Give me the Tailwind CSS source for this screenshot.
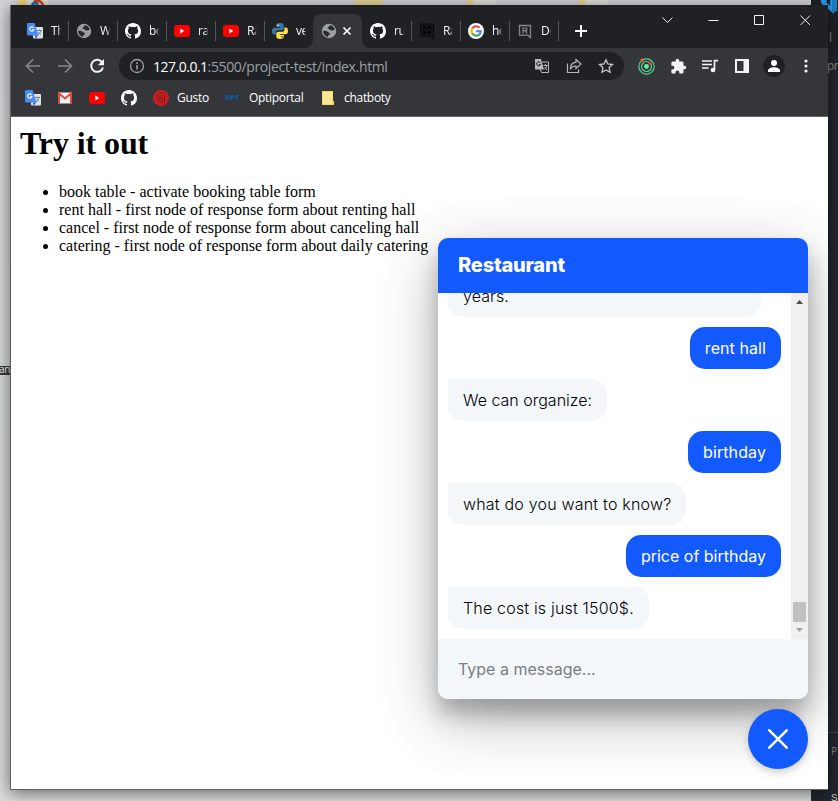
<!DOCTYPE html>
<html lang="en">
<head>
<meta charset="utf-8">
<title>Try it out</title>
<script src="https://cdn.jsdelivr.net/npm/@tailwindcss/browser@4"></script>
</head>
<body class="h-[801px] w-[838px] overflow-hidden">
<svg class="hidden">
  <symbol id="github" viewBox="0 0 16 16"><path fill="#fff" d="M8 0C3.58 0 0 3.58 0 8c0 3.54 2.29 6.53 5.47 7.59.4.07.55-.17.55-.38 0-.19-.01-.82-.01-1.49-2.01.37-2.53-.49-2.69-.94-.09-.23-.48-.94-.82-1.13-.28-.15-.68-.52-.01-.53.63-.01 1.08.58 1.23.82.72 1.21 1.87.87 2.33.66.07-.52.28-.87.51-1.07-1.78-.2-3.64-.89-3.64-3.95 0-.87.31-1.59.82-2.15-.08-.2-.36-1.02.08-2.12 0 0 .67-.21 2.2.82a7.6 7.6 0 0 1 4 0c1.53-1.04 2.2-.82 2.2-.82.44 1.1.16 1.92.08 2.12.51.56.82 1.27.82 2.15 0 3.07-1.87 3.75-3.65 3.95.29.25.54.73.54 1.48 0 1.07-.01 1.93-.01 2.2 0 .21.15.46.55.38A8 8 0 0 0 16 8c0-4.42-3.58-8-8-8z"/></symbol>
  <symbol id="youtube" viewBox="0 0 16 16"><rect y="2" width="16" height="12" rx="3" fill="#f00"/><path d="M6.300 5.600v4.800L10.300 8z" fill="#fff"/></symbol>
  <symbol id="translate" viewBox="0 0 16 16"><rect x="6" y="4" width="10" height="11.500" rx="1" fill="#dfe3e8"/><path d="M8.300 15.800 8 12.500h3.500z" fill="#3460c0"/><path d="M10 7.500h5M12.500 6.500v1M14 7.500c-.4 2-1.700 3.300-3 4M11.500 9c.6 1.200 1.300 2 2.300 2.600" stroke="#6d8792" fill="none"/><path d="M1 0h6.500l4 12.500H1a1 1 0 0 1-1-1V1a1 1 0 0 1 1-1z" fill="#4a8af4"/><path d="M6.600 4.700A2.200 2.200 0 1 0 7 6.700H4.900" stroke="#fff" stroke-width="1.100" fill="none"/></symbol>
  <symbol id="globe" viewBox="0 0 16 16"><circle cx="8" cy="8" r="7.200" fill="#9aa0a6"/><path d="M2 8c1.500-.3 3.500-.3 4.500.8.8.8 2 .4 2.400 1.500.4 1-.6 1.400-1.200 1.800-.6.500-.4 1.300-.7 1.900C4.500 13.600 2.300 11.300 2 8zM8.500 1.900c.7 1-.3 1.700-1.300 2.200C6.300 4.600 6.700 6 8 6.200c1 .2 1.500 1.300 2.700 1.300 1.100 0 1.800-.7 3-.5C13.500 4.200 11.200 2 8.500 1.900z" fill="#292a2d"/></symbol>
</svg>

<div class="relative h-[801px] w-[838px] overflow-hidden bg-gradient-to-b from-[#d6d7d9] to-[#dcddde]">
  <!-- Desktop remnants and the editor window behind the browser -->
  <div class="absolute left-[18px] top-0 h-[5px] w-[30px] bg-[#e6e3dc]"><div class="h-full w-2 bg-[#f2d585]"></div></div>
  <svg class="absolute left-[30px] top-0" width="17" height="5"><path d="M2 5 5 2l3 3" stroke="#1777a8" stroke-width="3" fill="none"/><path d="M4 1c5-1 8 1 9 4" stroke="#d93b2b" stroke-width="2.500" fill="none"/></svg>
  <div class="absolute left-[354px] top-0 h-[5px] w-[29px] bg-[#ead79c]"></div>
  <div class="absolute left-[466px] top-0 h-[5px] w-[30px] bg-[#e2e0d9]"><div class="h-full w-2 bg-[#ead79c]"></div></div>
  <div class="absolute left-[578px] top-0 h-[5px] w-[30px] bg-[#e2e0d9]"><div class="h-full w-2 bg-[#ead79c]"></div></div>
  <div class="absolute -left-[3px] top-[366px] h-[9px] w-4 bg-[#3a3a3c]"></div>
  <div class="absolute -left-px top-[363px] font-['Open_Sans',sans-serif] text-[10px] leading-[13px] tracking-[-0.4px] text-white">an</div>
  <div class="absolute left-[811px] top-0 h-[801px] w-[27px] bg-[#23272e]">
    <div class="h-[55px] bg-[#1e2227]"></div>
    <svg class="absolute left-[10px] top-0" width="17" height="14"><path d="M0 0 11 10V0M1 4 5 0" fill="none" stroke="#2a9df4" stroke-width="3.500"/><path d="M11-2h5v13l-5 2z" fill="#1b80c8"/></svg>
    <div class="absolute left-[18px] top-[31px] font-['Open_Sans',sans-serif] text-[12px] leading-[14px] text-[#8b8f97]">l</div>
    <div class="absolute left-[16px] top-[59px] font-['Open_Sans',sans-serif] text-[12px] leading-[14px] tracking-[-0.5px] text-[#8b8f97]">pr</div>
    <div class="absolute left-0 top-[732px] h-px w-[27px] bg-[#3e4452]"></div>
    <div class="absolute left-5 top-[745px] font-['Open_Sans',sans-serif] text-[10px] leading-[13px] text-[#7f848e]">P</div>
    <div class="absolute left-[20px] top-[791px] font-['Liberation_Mono',monospace] text-[11px] leading-[14px] text-[#c5c9d0]">S</div>
  </div>

  <!-- Browser window -->
  <div class="absolute left-[10px] top-[5px] flex h-[785px] w-[818px] flex-col border-b border-l border-[#5f6063] bg-white shadow-[0_3px_16px_rgba(0,0,0,0.55)]">
    <!-- Tab strip -->
    <div class="relative flex h-[43px] shrink-0 items-end bg-[#202124] pl-[9px] font-['Open_Sans','Noto_Sans',sans-serif] text-[12px] tracking-[-0.4px] text-[#f1f3f4]">
      <div class="flex h-[34px] w-[49px] shrink-0 items-center pl-[7px]"><svg class="size-4 shrink-0"><use href="#translate"/></svg><span class="ml-2 w-[10px] overflow-hidden [mask-image:linear-gradient(to_right,#000_70%,transparent)]">Th</span><i class="ml-[7px] h-5 w-px bg-[#55575b]"></i></div>
      <div class="flex h-[34px] w-[49px] shrink-0 items-center pl-[7px]"><svg class="size-4 shrink-0"><use href="#globe"/></svg><span class="ml-2 w-[10px] overflow-hidden [mask-image:linear-gradient(to_right,#000_70%,transparent)]">W</span><i class="ml-[7px] h-5 w-px bg-[#55575b]"></i></div>
      <div class="flex h-[34px] w-[49px] shrink-0 items-center pl-[7px]"><svg class="size-4 shrink-0"><use href="#github"/></svg><span class="ml-2 w-[10px] overflow-hidden [mask-image:linear-gradient(to_right,#000_70%,transparent)]">bo</span><i class="ml-[7px] h-5 w-px bg-[#55575b]"></i></div>
      <div class="flex h-[34px] w-[49px] shrink-0 items-center pl-[7px]"><svg class="size-4 shrink-0"><use href="#youtube"/></svg><span class="ml-2 w-[10px] overflow-hidden [mask-image:linear-gradient(to_right,#000_80%,transparent)]">ra</span><i class="ml-[7px] h-5 w-px bg-[#55575b]"></i></div>
      <div class="flex h-[34px] w-[49px] shrink-0 items-center pl-[7px]"><svg class="size-4 shrink-0"><use href="#youtube"/></svg><span class="ml-2 w-[10px] overflow-hidden [mask-image:linear-gradient(to_right,#000_70%,transparent)]">Ra</span><i class="ml-[7px] h-5 w-px bg-[#55575b]"></i></div>
      <div class="flex h-[34px] w-[48px] shrink-0 items-center pl-[7px]"><svg class="size-4 shrink-0" viewBox="0 0 16 16"><path d="M8 0C5 0 4.200.9 4.200 2.400V4H8.200v.7H2.300C.8 4.700 0 6 0 8s.7 3.500 2 3.500h1.600V9.600c0-1.400 1-2.300 2.300-2.300h3.800c1.200 0 2-.8 2-2V2.400C11.700.8 10.500 0 8 0z" fill="#3b77a8"/><path d="M8 16c3 0 3.800-.9 3.800-2.400V12H7.800v-.7h5.900C15.200 11.300 16 10 16 8s-.7-3.500-2-3.500h-1.600v1.900c0 1.400-1 2.300-2.300 2.300H6.300c-1.200 0-2 .8-2 2v2.900C4.300 15.200 5.500 16 8 16z" fill="#ffdc4c"/><circle cx="6" cy="2.200" r=".8" fill="#fff"/><circle cx="10" cy="13.800" r=".8" fill="#202124"/></svg><span class="ml-2 w-[10px] overflow-hidden [mask-image:linear-gradient(to_right,#000_80%,transparent)]">ve</span></div>
      <div class="relative flex h-[34px] w-[49px] shrink-0 items-center rounded-t-lg bg-[#35363a] pl-[8px]">
        <svg class="absolute -left-2 bottom-0" width="8" height="8"><path d="M8 0v8H0a8 8 0 0 0 8-8z" fill="#35363a"/></svg>
        <svg class="absolute -right-2 bottom-0" width="8" height="8"><path d="M0 0v8h8a8 8 0 0 1-8-8z" fill="#35363a"/></svg>
        <svg class="size-4 shrink-0"><use href="#globe"/></svg>
        <svg class="ml-[5px] size-[10px]" viewBox="0 0 10 10"><path d="m1.500 1.500 7 7m0-7-7 7" stroke="#fff" stroke-width="1.700"/></svg>
      </div>
      <div class="flex h-[34px] w-[50px] shrink-0 items-center pl-[8px]"><svg class="size-4 shrink-0"><use href="#github"/></svg><span class="ml-2 w-[10px] overflow-hidden [mask-image:linear-gradient(to_right,#000_80%,transparent)]">ru</span><i class="ml-[7px] h-5 w-px bg-[#55575b]"></i></div>
      <div class="flex h-[34px] w-[49px] shrink-0 items-center pl-[7px]"><svg class="size-4 shrink-0" viewBox="0 0 16 16"><path d="M1.500 1h13v14.500L11 13H1.500z" fill="#17181a" stroke="#090909"/><path d="M4 6V3.500h2.500V6M4 5h2.500M9 6V3.500h2.500V6M9 5h2.500M6.500 8H4v1.200h2.500V11H4M9 11V8h2.500v3M9 9.700h2.500" fill="none" stroke="#020202"/></svg><span class="ml-2 w-[10px] overflow-hidden [mask-image:linear-gradient(to_right,#000_70%,transparent)]">Ra</span><i class="ml-[7px] h-5 w-px bg-[#55575b]"></i></div>
      <div class="flex h-[34px] w-[49px] shrink-0 items-center pl-[7px]"><svg class="size-4 shrink-0" viewBox="0 0 16 16"><circle cx="8" cy="8" r="8" fill="#fff"/><g fill="none" stroke-width="2.100"><path d="M4.300 5.300A4.700 4.700 0 0 1 11.500 4.700" stroke="#ea4335"/><path d="M4.500 11a4.900 4.900 0 0 1-.2-5.700" stroke="#fbbc05"/><path d="M11.300 11.600a4.900 4.900 0 0 1-7-.9" stroke="#34a853"/><path d="M8.100 8.200h4.600c0 1.500-.5 2.700-1.500 3.500" stroke="#4285f4"/></g></svg><span class="ml-2 w-[10px] overflow-hidden [mask-image:linear-gradient(to_right,#000_70%,transparent)]">ho</span><i class="ml-[7px] h-5 w-px bg-[#55575b]"></i></div>
      <div class="flex h-[34px] w-[49px] shrink-0 items-center pl-[7px]"><svg class="size-4 shrink-0" viewBox="0 0 16 16"><path d="M2.500 2.500h11v12l-2.800-2.300H2.500z" fill="none" stroke="#85878a" stroke-width="1.300"/><path d="M6 10.300V5h3.700v2.700H6m2.200 0 1.800 2.600" fill="none" stroke="#85878a" stroke-width="1.200"/></svg><span class="ml-2 w-[10px] overflow-hidden [mask-image:linear-gradient(to_right,#000_75%,transparent)]">Do</span><i class="ml-[7px] h-5 w-px bg-[#55575b]"></i></div>
      <div class="flex h-[34px] w-[44px] shrink-0 items-center justify-center"><svg class="size-3" viewBox="0 0 12 12"><path d="M6 0v12M0 6h12" stroke="#fff" stroke-width="2"/></svg></div>
      <svg class="mb-[13px] ml-[41px] shrink-0" width="174" height="30" fill="none" stroke="#f1f1f1"><path d="m18.500 12.500 5 5 5-5M64.500 15.500h10M110.500 10.500h9v9h-9zM156.500 10.500l9.500 9.500m0-9.500-9.500 9.500"/></svg>
    </div>

    <!-- Navigation toolbar -->
    <div class="flex h-9 shrink-0 items-center bg-[#35363a] pl-[6px]">
      <div class="flex w-8 justify-center"><svg class="size-4" viewBox="0 0 16 16"><path d="M15 8H2M8 1.500 1.500 8 8 14.500" fill="none" stroke="#84868a" stroke-width="1.700"/></svg></div>
      <div class="flex w-8 justify-center"><svg class="size-4" viewBox="0 0 16 16"><path d="M1 8h13M8 1.500 14.500 8 8 14.500" fill="none" stroke="#84868a" stroke-width="1.700"/></svg></div>
      <div class="flex w-8 justify-center"><svg class="size-4" viewBox="0 0 16 16"><path d="M13.300 4.600A6 6 0 1 0 14 9.500" fill="none" stroke="#f1f3f4" stroke-width="2"/><path d="M15 1v6.200H8.800z" fill="#f1f3f4"/></svg></div>
      <div class="ml-[6px] flex h-7 w-[505px] items-center rounded-full bg-[#202124] pl-[10px] font-['Open_Sans','Noto_Sans',sans-serif] text-[14px]">
        <svg class="size-4" viewBox="0 0 16 16"><circle cx="8" cy="8" r="6.500" fill="none" stroke="#9aa0a6" stroke-width="1.300"/><path d="M8 7v4.500M8 4.300v1.700" stroke="#9aa0a6" stroke-width="1.600"/></svg>
        <span class="ml-[8px] w-[373px] whitespace-nowrap tracking-[-0.36px] text-[#9aa0a6]"><span class="tracking-[-0.5px] text-white">127.0.0.1</span>:5500/project-test/index.html</span>
        <div class="flex w-8 justify-center"><svg class="size-4" viewBox="0 0 16 16"><path d="M8 4h6.500v10.500H7.500L6 11" fill="none" stroke="#b5b7ba"/><path d="M9.500 7.500h4M11.500 6v1.500M13 7.500c-.5 2-1.500 3-2.500 4M10.500 9l2.500 3" stroke="#b5b7ba" fill="none"/><path d="M1 1h5.800L10 11.500H1z" fill="#b5b7ba"/><path d="M6.300 4.700A2 2 0 1 0 6.500 6.500H4.800" stroke="#202124" fill="none"/></svg></div>
        <div class="flex w-8 justify-center"><svg class="size-4" viewBox="0 0 16 16" fill="none" stroke="#b5b7ba" stroke-width="1.200"><path d="M1.500 5.500v9h11v-3M10 1.500l5 4.500-5 4.500V8C7.500 7.800 5.500 9 4.300 11.300c0-4 2.200-6.800 5.700-7.200z"/></svg></div>
        <div class="flex w-8 justify-center"><svg class="size-4" viewBox="0 0 16 16"><path d="m8 1.800 1.900 4.200 4.600.5-3.400 3.100.9 4.600-4-2.300-4 2.300.9-4.600-3.400-3.100L6.100 6z" fill="none" stroke="#c6c8cb" stroke-width="1.300"/></svg></div>
      </div>
      <div class="ml-[6px] flex w-8 justify-center"><svg class="size-[17px]" viewBox="0 0 16 16"><g fill="none" stroke="#55d39a" stroke-width="1.100"><circle cx="8" cy="8" r="7.200"/><circle cx="8" cy="8" r="4.700"/></g><circle cx="8" cy="8" r="2.300" fill="#5ff0a2"/><circle cx="4" cy="1.800" r="1.600" fill="#f26322"/><circle cx="11.300" cy="4.800" r="1.500" fill="#f04a24"/></svg></div>
      <div class="flex w-8 justify-center"><svg class="size-[17px]" viewBox="0 0 24 24"><path fill="#f1f3f4" d="M20.500 11H19V7a2 2 0 0 0-2-2h-4V3.500a2.500 2.500 0 0 0-5 0V5H4a2 2 0 0 0-2 2v3.800h1.500a2.700 2.700 0 0 1 0 5.400H2V20c0 1.100.9 2 2 2h3.800v-1.500a2.700 2.700 0 0 1 5.400 0V22H17a2 2 0 0 0 2-2v-4h1.500a2.500 2.500 0 0 0 0-5z"/></svg></div>
      <div class="flex w-8 justify-center"><svg class="size-4" viewBox="0 0 16 16"><path d="M0 3h10M0 6.500h10M0 10h6.500" stroke="#f1f3f4" stroke-width="1.500"/><path d="M12.500 12V2.700H16" fill="none" stroke="#f1f3f4" stroke-width="1.700"/><circle cx="11" cy="12" r="2.300" fill="#f1f3f4"/></svg></div>
      <div class="flex w-8 justify-center"><svg class="size-4" viewBox="0 0 16 16"><path d="M2 2h12v12H2z" fill="none" stroke="#f1f3f4" stroke-width="2"/><path d="M9.500 2H14v12H9.500z" fill="#f1f3f4"/></svg></div>
      <div class="flex w-8 justify-center"><svg class="size-[22px]" viewBox="0 0 22 22"><circle cx="11" cy="11" r="11" fill="#202124"/><circle cx="11" cy="8" r="3" fill="#fff"/><path d="M5 17v-1.500c0-2 3-3.300 6-3.300s6 1.300 6 3.300V17z" fill="#fff"/></svg></div>
      <div class="flex w-8 justify-center"><svg class="size-4" viewBox="0 0 16 16" fill="#f1f3f4"><circle cx="8" cy="3" r="1.600"/><circle cx="8" cy="8" r="1.600"/><circle cx="8" cy="13" r="1.600"/></svg></div>
    </div>

    <!-- Bookmarks bar -->
    <div class="flex h-[33px] shrink-0 items-center border-b border-[#626367] bg-[#35363a] pb-[4px] pl-[14px] font-['Open_Sans','Noto_Sans',sans-serif] text-[12px] tracking-[-0.3px] text-white">
      <svg class="size-4"><use href="#translate"/></svg>
      <svg class="ml-4 size-4" viewBox="0 0 16 16"><rect x="1" y="2.500" width="14" height="11" rx="1" fill="#f1f1f1"/><path d="M2 13.500v-10l6 5 6-5v10" fill="none" stroke="#dd4b3e" stroke-width="2"/></svg>
      <svg class="ml-4 size-4"><use href="#youtube"/></svg>
      <svg class="ml-4 size-4"><use href="#github"/></svg>
      <svg class="ml-4 size-4" viewBox="0 0 16 16"><circle cx="8" cy="8" r="8" fill="#c4201f"/><path d="M10.500 3.500C7 1.500 3.500 5 4 8.500c.4 3 3 4.500 5.500 3.500V8.500H7M11.500 3v9.500M9 5.500c-2 0-2.500 2-2.500 4" fill="none" stroke="#7a191b" stroke-width=".9"/></svg>
      <span class="ml-2 w-12">Gusto</span>
      <span class="w-4 text-[7px] font-extrabold italic tracking-[0.2px] text-[#0a5cab]">OPT</span>
      <span class="ml-2 w-[73px]">Optiportal</span>
      <svg class="h-[14px] w-3" viewBox="0 0 12 14"><path d="M0 0h11v10h1v4H0z" fill="#fbd867"/><path d="M1 1h9v12H1z" fill="#ffe596"/></svg>
      <span class="ml-[10px]">chatboty</span>
    </div>

    <!-- Page -->
    <div class="relative grow overflow-hidden bg-white font-['Liberation_Serif',serif] text-black">
      <h1 class="ml-[9px] mt-[8px] text-[32px] font-bold leading-[37px] tracking-[-0.1px]">Try it out</h1>
      <ul class="ml-2 mt-[21px] list-disc pl-10 text-[16px] leading-[18px]">
        <li>book table - activate booking table form</li>
        <li>rent hall - first node of response form about renting hall</li>
        <li>cancel - first node of response form about canceling hall</li>
        <li>catering - first node of response form about daily catering</li>
      </ul>

      <!-- Chat widget -->
      <section class="absolute bottom-[90px] right-5 flex h-[461px] w-[370px] flex-col overflow-hidden rounded-[10px] bg-white font-['Inter',sans-serif] text-[16px] shadow-[0_19px_60px_rgba(0,0,0,0.3),0_15px_20px_rgba(0,0,0,0.22)]">
        <header class="flex h-[55px] shrink-0 items-center bg-[#135afe] px-5 pb-[2px] text-[20px] font-extrabold tracking-[-0.2px] text-white">Restaurant</header>
        <div class="flex h-[346px] shrink-0">
          <div class="flex grow flex-col justify-end gap-[10px] overflow-hidden p-[10px] font-light leading-[22px] text-black">
            <div class="w-[313px] shrink-0 self-start rounded-[15px] rounded-tl-none bg-[#f3f7fa] px-[15px] py-[10px] tracking-[0.1px]">years.</div>
            <div class="shrink-0 self-end rounded-[15px] bg-[#135afe] px-[15px] py-[10px] font-normal tracking-[0.08px] text-white">rent hall</div>
            <div class="shrink-0 self-start rounded-[15px] rounded-tl-none bg-[#f3f7fa] px-[15px] py-[10px]">We can organize:</div>
            <div class="shrink-0 self-end rounded-[15px] bg-[#135afe] px-[15px] py-[10px] font-normal tracking-[0.1px] text-white">birthday</div>
            <div class="shrink-0 self-start rounded-[15px] rounded-tl-none bg-[#f3f7fa] px-[15px] py-[10px] tracking-[0.2px]">what do you want to know?</div>
            <div class="shrink-0 self-end rounded-[15px] bg-[#135afe] px-[15px] py-[10px] font-normal text-white">price of birthday</div>
            <div class="shrink-0 self-start rounded-[15px] rounded-tl-none bg-[#f3f7fa] px-[15px] py-[10px] tracking-[0.18px]">The cost is just 1500$.</div>
          </div>
          <div class="flex w-[17px] shrink-0 flex-col items-center bg-[#f0f0f0]">
            <svg class="mt-[7px]" width="7" height="4"><path d="M0 4 3.500 0 7 4z" fill="#505050"/></svg>
            <div class="mt-auto h-5 w-[13px] bg-[#c1c1c1]"></div>
            <svg class="mb-[7px] mt-[6px]" width="7" height="4"><path d="M0 0 3.500 4 7 0z" fill="#a3a3a3"/></svg>
          </div>
        </div>
        <div class="flex grow items-center bg-[#f3f7fa] px-5 text-[#7b7d80]">Type a message...</div>
      </section>
      <button class="absolute bottom-5 right-5 flex size-[60px] items-center justify-center rounded-full bg-[#135afe] shadow-[0_3px_8px_rgba(0,0,0,0.2)]"><svg class="size-5" viewBox="0 0 20 20"><path d="m1.300 1.300 17.400 17.400m0-17.400L1.300 18.700" stroke="#fff" stroke-width="2.500" stroke-linecap="round"/></svg></button>
    </div>
  </div>
</div>
</body>
</html>
